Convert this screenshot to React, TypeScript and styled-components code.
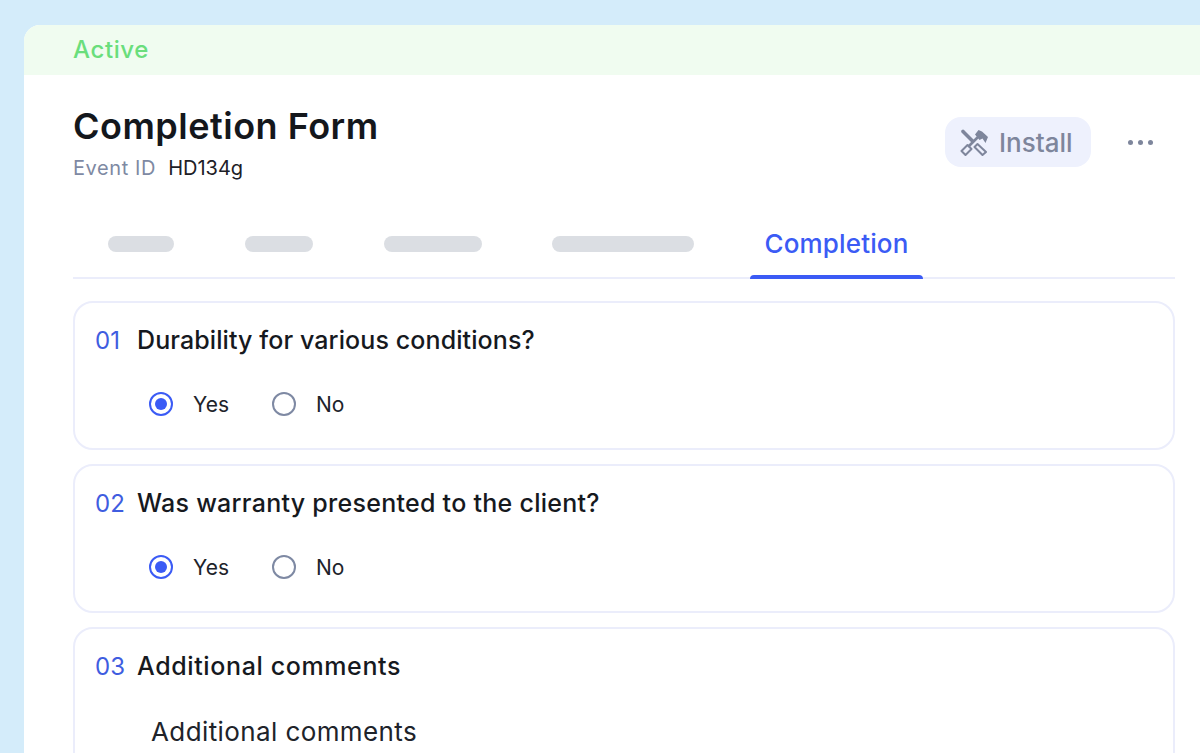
import React from "react";
import styled, { createGlobalStyle } from "styled-components";

const Global = createGlobalStyle`
  html, body { margin: 0; padding: 0; height: 753px; overflow: hidden; background: #d4ecfa; }
  * { box-sizing: border-box; }
  body { font-family: Inter, "Liberation Sans", sans-serif; }
`;
const Page = styled.div`
  height: 753px; padding: 25px 0 0 24px; overflow: hidden;
`;
const Card = styled.main`
  height: 728px; background: #fff; border-top-left-radius: 16px; overflow: hidden;
`;
const StatusBar = styled.div`
  height: 50px; background: #f0fcf0; padding: 0 0 0 49px; color: #6ade7c;
  font-size: 24px; font-weight: 500; line-height: 50px; letter-spacing: 0.6px;
`;
const Content = styled.div`
  padding: 0 25px 0 49px;
`;
const Header = styled.header`
  display: flex; justify-content: space-between; align-items: flex-start; height: 133px; padding-top: 28px;
`;
const Title = styled.h1`
  margin: 0; font-size: 36px; line-height: 46px; font-weight: 600; color: #14171c; letter-spacing: 0.5px;
`;
const Meta = styled.div`
  display: flex; gap: 12px; margin-top: 5px; font-size: 20px; line-height: 28px; color: #1d2026;
`;
const MetaLabel = styled.span`
  color: #7e89a3; letter-spacing: 0.6px;
`;
const Actions = styled.div`
  display: flex; align-items: center; padding: 14px 22px 0 0; gap: 37px;
`;
const InstallButton = styled.button`
  display: flex; align-items: center; gap: 11px; width: 146px; height: 50px; padding: 0 0 0 15px;
  border: 0; border-radius: 16px; background: #eef1fd; color: #7e869c;
  font: 500 26px Inter, sans-serif;
`;
const MoreDots = styled.div`
  display: flex; gap: 5px;
`;
const Dot = styled.span`
  width: 5px; height: 5px; border-radius: 50%; background: #7e869c;
`;
const Tabs = styled.nav`
  display: flex; align-items: center; height: 71px; border-bottom: 2px solid #ebedfb; padding-left: 35px;
`;
const TabStub = styled.span<{ $w: number; $gap: number }>`
  width: ${(p) => p.$w}px; height: 16px; margin-right: ${(p) => p.$gap}px; margin-top: 3px;
  border-radius: 8px; background: #dbdee3;
`;
const ActiveTab = styled.div`
  position: relative; width: 173px; height: 69px; margin-left: -14px; text-align: center;
  color: #3b5bf5; font-size: 26px; font-weight: 500; line-height: 72px; letter-spacing: 0.15px;
  &::after {
    content: ""; position: absolute; left: 0; right: 0; bottom: -2px; height: 4px;
    border-radius: 4px 4px 0 0; background: #3b5bf5;
  }
`;
const Questions = styled.div`
  display: flex; flex-direction: column; gap: 14px; padding-top: 22px;
`;
const Question = styled.section`
  height: 149px; border: 2px solid #ebedfb; border-radius: 20px; padding: 18px 20px 0;
  &:last-child { height: 300px; }
`;
const QuestionHead = styled.div<{ $track: number }>`
  display: flex; align-items: center; height: 38px; font-size: 25px; font-weight: 500; color: #16191e;
  letter-spacing: ${(p) => p.$track}px;
`;
const Num = styled.span`
  width: 42px; color: #3f5de0; font-weight: 400; font-size: 24px; letter-spacing: 0;
`;
const Options = styled.div`
  display: flex; gap: 43px; padding: 32px 0 0 54px;
`;
const Option = styled.label`
  display: flex; align-items: center; gap: 20px; height: 26px; font-size: 21px; color: #20232a;
`;
const Radio = styled.span<{ $on?: boolean }>`
  width: 24px; height: 24px; border-radius: 50%; display: flex; align-items: center; justify-content: center;
  border: 2px solid ${(p) => (p.$on ? "#3b5bf5" : "#7e89a3")};
  &::after {
    content: ""; width: 12px; height: 12px; border-radius: 50%;
    background: ${(p) => (p.$on ? "#3b5bf5" : "transparent")};
  }
`;
const CommentLabel = styled.div`
  padding: 31px 0 0 56px; font-size: 26px; line-height: 32px; color: #20232a; letter-spacing: 0.4px;
`;

const ToolsIcon = () => (
  <svg width="28" height="28" viewBox="0 0 28 28" fill="none" stroke="#7e869c" strokeWidth="2" strokeLinejoin="round" strokeLinecap="round">
    <path d="M3 3.5 L12.5 13" strokeWidth="3.6" />
    <path d="M17.5 16 L26 24 L22.5 27 L14.5 19 Z" />
    <path d="M9 18 L17.5 9.5" strokeWidth="2.6" />
    <path d="M7.5 17 L11.5 21 L5.5 27 L1.5 23 Z" />
    <path d="M15 6.5 L18.5 2 L22 3.5 L28 9 L25.5 15 L22.5 10.5 L19.5 12 Z" fill="#7e869c" stroke="none" />
  </svg>
);

const YesNo = () => (
  <Options>
    <Option><Radio $on />Yes</Option>
    <Option><Radio />No</Option>
  </Options>
);

export default function App() {
  return (
    <Page>
      <Global />
      <Card>
        <StatusBar>Active</StatusBar>
        <Content>
          <Header>
            <div>
              <Title>Completion Form</Title>
              <Meta><MetaLabel>Event ID</MetaLabel><span>HD134g</span></Meta>
            </div>
            <Actions>
              <InstallButton><ToolsIcon />Install</InstallButton>
              <MoreDots><Dot /><Dot /><Dot /></MoreDots>
            </Actions>
          </Header>
          <Tabs>
            <TabStub $w={66} $gap={71} />
            <TabStub $w={68} $gap={71} />
            <TabStub $w={98} $gap={70} />
            <TabStub $w={142} $gap={70} />
            <ActiveTab>Completion</ActiveTab>
          </Tabs>
          <Questions>
            <Question>
              <QuestionHead $track={0.1}><Num>01</Num>Durability for various conditions?</QuestionHead>
              <YesNo />
            </Question>
            <Question>
              <QuestionHead $track={0.27}><Num>02</Num>Was warranty presented to the client?</QuestionHead>
              <YesNo />
            </Question>
            <Question>
              <QuestionHead $track={0.62}><Num>03</Num>Additional comments</QuestionHead>
              <CommentLabel>Additional comments</CommentLabel>
            </Question>
          </Questions>
        </Content>
      </Card>
    </Page>
  );
}
